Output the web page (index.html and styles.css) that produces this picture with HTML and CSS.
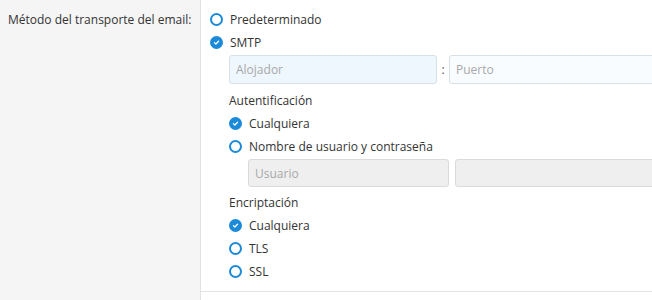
FILE: index.html
```html
<!DOCTYPE html>
<html lang="es">
<head>
<meta charset="utf-8">
<title>Método del transporte</title>
<link rel="stylesheet" href="styles.css">
</head>
<body>
<div class="form">
  <div class="row">
    <div class="label">Método del transporte del email:</div>
    <div class="field">
      <div class="opt"><span class="radio"></span>Predeterminado</div>
      <div class="opt"><span class="radio on"><svg viewBox="0 0 14 14"><path d="M3.8 7.2l2.2 2.2 4.2-4.4" /></svg></span>SMTP</div>
      <div class="sub">
        <div class="pair">
          <div class="input host">Alojador</div>
          <span class="colon">:</span>
          <div class="input port">Puerto</div>
        </div>
        <div class="heading">Autentificación</div>
        <div class="opt"><span class="radio on"><svg viewBox="0 0 14 14"><path d="M3.8 7.2l2.2 2.2 4.2-4.4" /></svg></span>Cualquiera</div>
        <div class="opt"><span class="radio"></span>Nombre de usuario y contraseña</div>
        <div class="pair creds">
          <div class="input gray user">Usuario</div>
          <div class="input gray pass"></div>
        </div>
        <div class="heading">Encriptación</div>
        <div class="opt"><span class="radio on"><svg viewBox="0 0 14 14"><path d="M3.8 7.2l2.2 2.2 4.2-4.4" /></svg></span>Cualquiera</div>
        <div class="opt"><span class="radio"></span>TLS</div>
        <div class="opt"><span class="radio"></span>SSL</div>
      </div>
    </div>
  </div>
  <div class="row">
    <div class="label"></div>
    <div class="field empty"></div>
  </div>
</div>
</body>
</html>
```
FILE: styles.css
```css
html, body {
  margin: 0;
  padding: 0;
  background: #ffffff;
  overflow: hidden;
}
body {
  font-family: "Open Sans", "Noto Sans", sans-serif;
  font-size: 12px;
  color: #333333;
  width: 652px;
  height: 300px;
}
.form {
  display: flex;
  flex-direction: column;
  height: 300px;
}
.row {
  display: flex;
}
.row:last-child {
  flex: 1;
}
.label {
  width: 201px;
  flex: none;
  background: #f5f5f5;
  border-right: 1px solid #e2e2e2;
  padding: 11px 0 0 8px;
  box-sizing: border-box;
  line-height: 18px;
}
.field {
  flex: 1;
  padding: 8px 0 8px 9px;
  border-bottom: 1px solid #e4e4e4;
  min-width: 0;
  overflow: hidden;
}
.field.empty {
  border-bottom: none;
}
.opt {
  display: flex;
  align-items: center;
  height: 23px;
  white-space: nowrap;
}
.radio {
  width: 13px;
  height: 13px;
  box-sizing: border-box;
  border: 2px solid #1b8ad8;
  border-radius: 50%;
  margin-right: 7px;
  flex: none;
  display: flex;
  align-items: center;
  justify-content: center;
}
.radio.on {
  background: #1b8ad8;
}
.radio svg {
  width: 11px;
  height: 11px;
  fill: none;
  stroke: #ffffff;
  stroke-width: 2;
  stroke-linecap: round;
  stroke-linejoin: round;
}
.sub {
  padding-left: 19px;
}
.pair {
  display: flex;
  align-items: center;
  margin: 1px 0 4px;
}
.input {
  height: 29px;
  box-sizing: border-box;
  border: 1px solid #d7e0e6;
  border-radius: 3px;
  background: #eef7fd;
  color: #a8a8a8;
  padding: 0 6px;
  display: flex;
  align-items: center;
  flex: none;
}
.host {
  width: 208px;
}
.colon {
  width: 12px;
  flex: none;
  text-align: center;
  color: #555555;
}
.port {
  width: 240px;
  background: #f8fcff;
}
.heading {
  height: 24px;
  display: flex;
  align-items: center;
}
.creds {
  margin: 1px 0 3px 19px;
}
.input.gray {
  background: #efefef;
  border-color: #dadada;
  height: 28px;
}
.user {
  width: 201px;
  margin-right: 6px;
}
.pass {
  width: 240px;
}
```
